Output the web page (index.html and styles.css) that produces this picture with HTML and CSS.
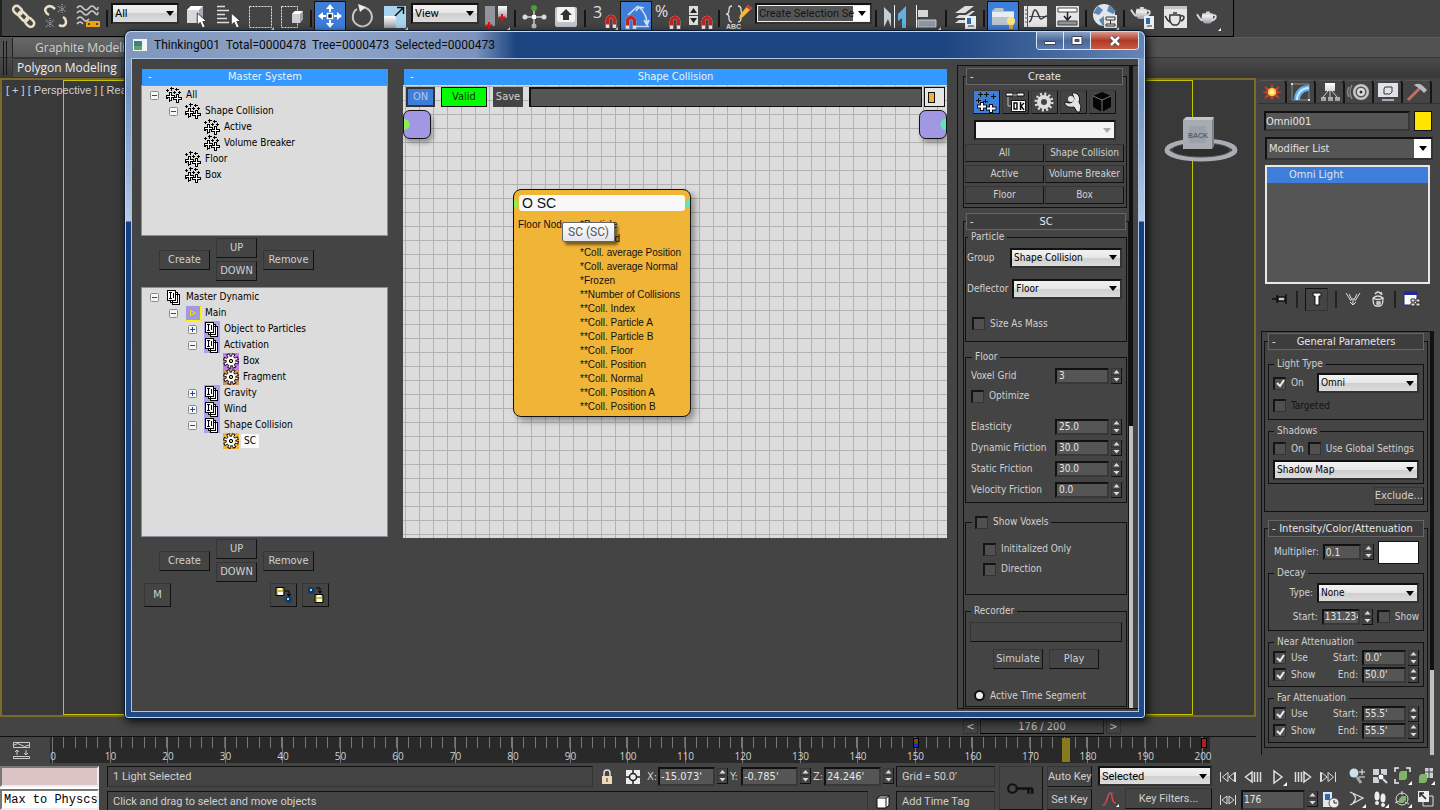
FILE: index.html
```html
<!DOCTYPE html>
<html lang="en">
<head>
  <meta charset="UTF-8" />
  <meta name="viewport" content="width=device-width, initial-scale=1" />
  <title>Thinking001</title>
  <link rel="stylesheet" href="styles.css">
</head>
<body>
  <!-- shared icons -->
  <svg class="sprite" aria-hidden="true">
    <linearGradient id="silver" x1="0" y1="0" x2="0" y2="1"><stop offset="0" stop-color="#fff"/><stop offset="1" stop-color="#9a9ea6"/></linearGradient>
    <symbol id="i-arrow" viewBox="0 0 12 18"><path d="M1 1v13l3-3 2.500 6 3-1.300-2.600-5.700H11z" fill="#fff" stroke="#333" stroke-width="1"/></symbol>
    <symbol id="i-magnet" viewBox="0 0 12 14"><path d="M2.500 14V6a3.500 3.500 0 0 1 7 0v8" fill="none" stroke="#f2f2f2" stroke-width="3.600"/><path d="M2.500 10.500V6a3.500 3.500 0 0 1 7 0v4.500" fill="none" stroke="#c0241e" stroke-width="3.400"/></symbol>
    <symbol id="i-pot" viewBox="0 0 24 16"><path d="M7 5C5 10 7 14 10 15h5c3-1 5-5 3-10z" fill="url(#silver)"/><path d="M11 3h4M7 5h11M7 12C3 10 3 7 1 5M18 6c5-1 5 4-1 6" fill="none" stroke="#d8dade" stroke-width="2"/></symbol>
    <symbol id="i-spin" viewBox="0 0 11 16"><path d="M.5 .5h10v15H.5z" fill="#444" stroke="#383838"/><path d="M10.500 0v16M0 15.500h11" stroke="#111"/><path d="M0 7.500h11" stroke="#333"/><path d="M2.500 5.500h6L5.500 2zM2.500 10h6l-3 3.500z" fill="#ddd"/></symbol>
    <symbol id="i-parts" viewBox="0 0 16 16"><g shape-rendering="crispEdges"><path d="M1.500 2v3M0 3.500h3M5.500 0v4M4 1.500h4M10.500 1v3M9 2.500h4M8.500 4v3M7 5.500h3M13.500 4v3M12 5.500h3M2 11.500H0M3 14.500h1" stroke="#000"/><path d="M3.500 5.500h2v3h3v2h-3v3h-2v-3h-3v-2h3z" fill="#fff" stroke="#000"/><path d="M10.500 7.500h2v3h3v2h-3v3h-2v-3h-3v-2h3z" fill="#fff" stroke="#000"/></g></symbol>
    <symbol id="i-dyn" viewBox="0 0 16 16"><g shape-rendering="crispEdges"><path d="M6.500 5.500h7v10h-7zM4.500 3.500h7v10h-7z" fill="#fff" stroke="#000"/><path d="M1.500 1.500h8v10h-8z" fill="#fff" stroke="#000"/><path d="M4.500 3v6M3 3.500h3M3 9.500h3M7.500 4v5" fill="none" stroke="#000"/></g></symbol>
    <symbol id="i-gear" viewBox="0 0 16 16"><circle cx="8" cy="8" r="6.200" fill="none" stroke="#000" stroke-width="3.400" stroke-dasharray="3 1.870"/><circle cx="8" cy="8" r="5" fill="#fff" stroke="#000"/><circle cx="8" cy="8" r="5.600" fill="none" stroke="#fff" stroke-width="2.600" stroke-dasharray="1.500 2.898" stroke-dashoffset="-.6"/><circle cx="8" cy="8" r="1.700" fill="#f0b437" stroke="#000"/></symbol>
    <symbol id="i-minus" viewBox="0 0 9 9"><rect x=".5" y=".5" width="8" height="8" rx="1" fill="#f6f6f6" stroke="#8a8a8a"/><path d="M2 4.500h5" stroke="#234a9a"/></symbol>
    <symbol id="i-plus" viewBox="0 0 9 9"><rect x=".5" y=".5" width="8" height="8" rx="1" fill="#f6f6f6" stroke="#8a8a8a"/><path d="M2 4.500h5M4.500 2v5" stroke="#234a9a"/></symbol>
    <symbol id="i-link" viewBox="0 0 28 28"><g fill="none" stroke="#e9dfc8" stroke-width="2.500"><rect x="3" y="5" width="10" height="7" rx="3.500" transform="rotate(45 8 8)"/><rect x="8" y="11" width="11" height="6" rx="3" transform="rotate(45 13 14)"/><rect x="15" y="17" width="10" height="7" rx="3.500" transform="rotate(45 20 20)"/></g></symbol>
  </svg>

  <header class="toolbar">
    <button class="tool" aria-label="Link"><svg viewBox="0 0 28 28"><use href="#i-link"/></svg></button>
    <button class="tool" aria-label="Unlink"><svg viewBox="0 0 28 28"><g fill="none" stroke="#e9dfc8" stroke-width="2.500"><path d="M7 13C3 11 2 7 5 5s6 0 8 2M17 23c3 2 7 1 7-3 0-3-1-4-3-5"/></g><g fill="none" stroke="#999" stroke-width="1.500" stroke-dasharray="1 1"><path d="M16 4l8 6M16 10l8-6M20 2v10M4 18l8 7M4 25l8-7M8 16v10"/></g></svg></button>
    <button class="tool" aria-label="Bind to space warp"><svg viewBox="0 0 28 28"><path d="M3 6q3-4 6 0t6 0 6 0 3-1M3 11q3-4 6 0t6 0 6 0 3-1M3 17q3-4 6 0t6 0M3 22q3-4 6 0" fill="none" stroke="#ccc" stroke-width="1.500"/><path d="M13 20h5v4h-5zM20 20h5v4h-5zM16 22h6" fill="none" stroke="#e7a416" stroke-width="2"/></svg></button>
    <i class="sep"></i>
    <select class="drop" aria-label="Selection filter"><option>All</option></select>
    <button class="tool" aria-label="Select object"><svg viewBox="0 0 28 28"><path d="M5 8l4-4h12v12l-4 5H5z" fill="#d5d8dc"/><path d="M5 8l4-4h12l-4 4z" fill="#fff"/><path d="M17 8l4-4v12l-4 5z" fill="#a5a9b0"/><use href="#i-arrow" x="14" y="10" width="12" height="17"/></svg></button>
    <button class="tool" aria-label="Select by name"><svg viewBox="0 0 28 28"><path d="M3 4.500h8M3 8.500h12M3 12.500h8M3 16.500h10M3 20.500h12" stroke="#ddd" stroke-width="1.500"/><use href="#i-arrow" x="16" y="10" width="12" height="17"/></svg></button>
    <button class="tool" aria-label="Rectangular region"><svg viewBox="0 0 28 28"><path d="M3.500 4.500h22v21h-22z" fill="none" stroke="#e4e4e4" stroke-dasharray="2 1"/><path d="M28 25v3h-3z" fill="#ddd"/></svg></button>
    <button class="tool" aria-label="Window crossing"><svg viewBox="0 0 28 28"><path d="M3.500 4.500h16v21h-16z" fill="none" stroke="#e4e4e4" stroke-dasharray="2 1"/><path d="M14 12l3-3h8v8l-3 4h-8z" fill="#ccd0d5"/><path d="M14 12l3-3h8l-3 3z" fill="#fff"/><path d="M22 12l3-3v8l-3 4z" fill="#9da1a8"/></svg></button>
    <i class="sep"></i>
    <button class="tool active" aria-label="Move"><svg viewBox="0 0 28 28"><path d="M11.500 11.500h5v5h-5z" fill="#222" stroke="#fff" stroke-width="1.500"/><path d="M14 2l4 5h-3v3h-2V7h-3zM14 26l4-5h-3v-3h-2v3h-3zM2 14l5-4v3h3v2H7v3zM26 14l-5-4v3h-3v2h3v3z" fill="#fff"/></svg></button>
    <button class="tool" aria-label="Rotate"><svg viewBox="0 0 28 28"><path d="M16 5.500a9.500 9.500 0 1 1-7 1.500" fill="none" stroke="#c4c8cc" stroke-width="2"/><path d="M10 2l8 3-6 5z" fill="#eee"/></svg></button>
    <button class="tool" aria-label="Scale"><svg viewBox="0 0 28 28"><path d="M4 4h22v22H4z" fill="#a8d4ee"/><path d="M4 14h12v12H4z" fill="url(#silver)"/><path d="M15 14l8-8M17 5.500h6.500V12" fill="none" stroke="#111" stroke-width="1.500"/><path d="M28 25v3h-3z" fill="#ddd"/></svg></button>
    <select class="drop" aria-label="Coordinate system"><option>View</option></select>
    <button class="tool" aria-label="Pivot center"><svg viewBox="0 0 28 28"><path d="M3 4h10v20H3z" fill="#90949c"/><path d="M16 4h9v12h-9z" fill="url(#silver)"/><path d="M7 20v7M3.500 23.500h7M20 12v7M16.500 15.500h7" stroke="#d11" stroke-width="2"/><path d="M28 25v3h-3z" fill="#ddd"/></svg></button>
    <i class="sep"></i>
    <button class="tool" aria-label="Manipulate"><svg viewBox="0 0 28 28"><path d="M14 6v18M4 15h20" stroke="#ccc" stroke-width="1.500"/><circle cx="14" cy="6" r="3" fill="#4f9f35"/><circle cx="5" cy="15" r="2.500" fill="#ddd"/><circle cx="24" cy="15" r="2.500" fill="#ddd"/><circle cx="14" cy="24" r="2.500" fill="#bbb"/><path d="M12 13h4v4h-4z" fill="#fff"/></svg></button>
    <button class="tool" aria-label="Keyboard override"><svg viewBox="0 0 28 28"><rect x="3" y="5" width="22" height="20" rx="2" fill="#c3c6ca"/><rect x="5" y="5" width="18" height="15" rx="2" fill="#f3f3f3"/><path d="M14 7l6 6h-3v5h-6v-5H8z" fill="#333"/></svg></button>
    <i class="sep"></i>
    <button class="tool" aria-label="Snaps toggle"><svg viewBox="0 0 28 28"><text class="glyph" x="3" y="16">3</text><use href="#i-magnet" x="15" y="12" width="12" height="14"/><path d="M28 25v3h-3z" fill="#ddd"/></svg></button>
    <button class="tool active" aria-label="Angle snap"><svg viewBox="0 0 28 28"><path d="M6 13L16 4M17 5q8 7 8 17M14 24.500h13M14 9l3-4 5 1M22 18l3 5 2-5" fill="none" stroke="#d6e4f8" stroke-width="1.500"/><use href="#i-magnet" x="3" y="13" width="12" height="14"/></svg></button>
    <button class="tool" aria-label="Percent snap"><svg viewBox="0 0 28 28"><text class="glyph" x="1" y="15">%</text><use href="#i-magnet" x="15" y="13" width="12" height="14"/></svg></button>
    <button class="tool" aria-label="Spinner snap"><svg viewBox="0 0 28 28"><path d="M3 4h9v9H3zM3 14h9v9H3z" fill="#ddd"/><path d="M4 11h7L7.500 6zM4 16h7l-3.500 5z" fill="#222"/><use href="#i-magnet" x="15" y="13" width="12" height="14"/></svg></button>
    <i class="sep"></i>
    <button class="tool" aria-label="Edit named selections"><svg viewBox="0 0 28 28"><path d="M8 4q-3 0-3 4t-3 4q3 0 3 4t3 4M14 4q3 0 3 4t3 4q-3 0-3 4t-3 4" fill="none" stroke="#ddd" stroke-width="1.300"/><path d="M24 3l4 3-9 9-4 2 1-4z" fill="#f2b83a"/><path d="M24 3l4 3-2 2-4-3z" fill="#c33"/><text class="abc" x="2" y="27">ABC</text></svg></button>
    <select class="drop dark named" aria-label="Named selection sets"><option>Create Selection Se</option></select>
    <i class="sep"></i>
    <button class="tool" aria-label="Mirror"><svg viewBox="0 0 28 28"><path d="M3 5l7 7v13l-3-8-4 8z" fill="#c6ced6"/><path d="M25 4l-8 8v7l4-3v10h4z" fill="#66b0e0"/><path d="M13.500 3v23" stroke="#eee"/></svg></button>
    <button class="tool" aria-label="Align"><svg viewBox="0 0 28 28"><path d="M3.500 3v23" stroke="#eee"/><path d="M5 8h10v7H5z" fill="#d4d8dc"/><path d="M5 18h18v7H5z" fill="#8f98a3" stroke="#ddd" stroke-width=".8"/><path d="M28 25v3h-3z" fill="#ddd"/></svg></button>
    <i class="sep"></i>
    <button class="tool" aria-label="Layers"><svg viewBox="0 0 28 28"><path d="M4 11l10-7h9l-9 7zM4 16l4-3 7 0 6-4h3l-9 7zM4 21l4-3h7l6-4h3l-9 7z" fill="#ddd"/><path d="M14 14h11v13H14z" fill="#e9eef3"/><path d="M16 16h4v6h-4z" fill="#2e6aa9"/><path d="M17 24h6" stroke="#333"/></svg></button>
    <i class="sep"></i>
    <button class="tool active" aria-label="Ribbon toggle"><svg viewBox="0 0 28 28"><path d="M3 9l3-3h8l1 3h10v14H3z" fill="#b9c3cd"/><path d="M3 10h22v5H3z" fill="#e8edf2"/><circle cx="22" cy="19" r="4" fill="#ffe278"/><path d="M20 23h4v4h-4z" fill="#e9a63a"/></svg></button>
    <button class="tool" aria-label="Curve editor"><svg viewBox="0 0 28 28"><path d="M3 4h23v21H3z" fill="#e3e5e7"/><path d="M6.500 4v21M4 8h3M4 12h3M4 16h3M4 20h3M8 14.500h18" stroke="#555"/><path d="M8 20c4-1 3-12 6-12s4 9 6 9 3-3 6-3" fill="none" stroke="#333" stroke-width="1.500"/></svg></button>
    <button class="tool" aria-label="Schematic view"><svg viewBox="0 0 28 28"><path d="M3 4h23v21H3z" fill="#e3e5e7"/><path d="M5 6h19v4H5z" fill="#fff" stroke="#444"/><path d="M5 19h19v4H5z" fill="#8f9599" stroke="#444"/><path d="M14.500 10v7M11 14l3.500 4 3.500-4" fill="none" stroke="#222" stroke-width="1.500"/></svg></button>
    <i class="sep"></i>
    <button class="tool" aria-label="Material editor"><svg viewBox="0 0 28 28"><circle cx="13" cy="13" r="11" fill="#dfe6ec"/><path d="M7 4l5 4-4 5-6-2M18 3l-2 6 6 3 3-3M8 18l5-4 3 6-4 4z" fill="#5e86b5"/><path d="M13 13h13v13H13z" fill="#e6e8ea"/><path d="M15 15h9v3h-9zM15 22h9v2h-9zM19.500 18v4" fill="none" stroke="#333"/><path d="M28 25v3h-3z" fill="#ddd"/></svg></button>
    <i class="sep"></i>
    <button class="tool" aria-label="Render setup"><svg viewBox="0 0 28 28"><use href="#i-pot" x="1" y="3" width="22" height="15"/><path d="M15 14h10v13H15z" fill="#e9eef3"/><path d="M17 16h4v6h-4z" fill="#2e6aa9"/><path d="M18 24h5" stroke="#333"/></svg></button>
    <button class="tool" aria-label="Rendered frame"><svg viewBox="0 0 28 28"><path d="M3 4h23v22H3z" fill="#e6e6e6"/><path d="M3 4h23v3H3z" fill="#c2c4c8"/><path d="M9 13h10c1 5 0 8-3 10h-4c-3-2-4-5-3-10zM9 20c-3-1-3-4-5-6M20 14c4-1 4 3 0 5M12 11h4" fill="none" stroke="#333" stroke-width="1.500"/></svg></button>
    <button class="tool" aria-label="Render"><svg viewBox="0 0 28 28"><use href="#i-pot" x="3" y="7" width="22" height="16"/><path d="M28 26v3h-3z" fill="#fff"/></svg></button>
  </header>

  <div class="ribbon">
    <span class="grip"></span>
    <div class="ribbon-tabs">
      <a href="#" class="ribbon-tab">Graphite Modeling</a>
      <a href="#" class="ribbon-panel">Polygon Modeling</a>
    </div>
  </div>

  <main class="work">
    <div class="stage">
      <section class="viewport">
        <p class="view-label">[ + ] [ Perspective ] [ Realistic ]</p>
        <div class="safe-frame"></div>
        <svg class="view-cube" viewBox="0 0 80 50"><ellipse cx="38" cy="34" rx="34" ry="9" fill="none" stroke="#a9aeb4" stroke-width="5"/><ellipse cx="38" cy="34" rx="29" ry="7" fill="#2e2e2e" stroke="#555"/><path d="M20 4l3-3h28l-2 4z" fill="#c2c6ca"/><path d="M20 4h29v29H20z" fill="#a7abb2"/><path d="M49 5l2-4v29l-2 3z" fill="#7e828a"/><path d="M26 10h17v17H26z" fill="#9ca0a8"/><text class="cube-text" x="35" y="22">BACK</text></svg>
      </section>
      <div class="time-slider">
        <button class="time-btn">&lt;</button><button class="time-thumb">176 / 200</button><button class="time-btn">&gt;</button>
      </div>
      <div class="track">
        <svg class="track-icon" viewBox="0 0 20 18"><path d="M1.500 1.500h16v5h-16zM2 4q4-3 7 0t8 0M5 9v5M3 11l2-2 2 2M14 9v5M12 12l2 2 2-2M1.500 15.500h16v2h-16z" fill="none" stroke="#ccc"/></svg>
        <div class="ruler">
          <div class="tick"><span>0</span></div><div class="tick"><span>10</span></div><div class="tick"><span>20</span></div><div class="tick"><span>30</span></div><div class="tick"><span>40</span></div>
          <div class="tick"><span>50</span></div><div class="tick"><span>60</span></div><div class="tick"><span>70</span></div><div class="tick"><span>80</span></div><div class="tick"><span>90</span></div>
          <div class="tick"><span>100</span></div><div class="tick"><span>110</span></div><div class="tick"><span>120</span></div><div class="tick"><span>130</span></div><div class="tick"><span>140</span></div>
          <div class="tick"><span>150</span></div><div class="tick"><span>160</span></div><div class="tick"><span>170</span></div><div class="tick"><span>180</span></div><div class="tick"><span>190</span></div>
          <div class="tick last"><span>200</span></div>
          <i class="key multi" style="left: 75%"></i>
          <i class="now" style="left: 88%"></i>
          <i class="key red" style="left: 100%"></i>
        </div>
      </div>
    </div>

    <aside class="command">
      <nav class="tabs">
        <button aria-label="Create"><svg viewBox="0 0 24 20"><path d="M12 1l2 6 6-3-3 5 5 1-5 2 3 5-6-3-2 5-2-5-6 3 3-5-5-2 5-1-3-5 6 3z" fill="#c8402a"/><circle cx="12" cy="10" r="4" fill="#ffd23e"/><circle cx="12" cy="10" r="2" fill="#fff7c0"/></svg></button>
        <button class="on" aria-label="Modify"><svg viewBox="0 0 24 20"><path d="M3 2h17v16H3z" fill="none" stroke="#888"/><path d="M5 18C5 9 11 3 20 3v6c-5 0-9 4-9 9z" fill="#5eb0ee"/><path d="M8 18C8 11 13 6 20 6" fill="none" stroke="#d2ecff" stroke-width="2"/><path d="M2 1h2v2H2zM19 17h2v2h-2z" fill="#ddd"/></svg></button>
        <button aria-label="Hierarchy"><svg viewBox="0 0 24 20"><path d="M7 1h10v8H7zM3 15h5v4H3zM10 15h5v4h-5zM17 15h5v4h-5z" fill="url(#silver)"/><path d="M12 9v6M10 9l-5 6M14 9l5 6" stroke="#ccc"/></svg></button>
        <button aria-label="Motion"><svg viewBox="0 0 24 20"><circle cx="14" cy="10" r="8" fill="#c3c7cb"/><circle cx="14" cy="10" r="5.500" fill="#555"/><circle cx="14" cy="10" r="4" fill="#ddd"/><circle cx="14" cy="10" r="1.500" fill="#333"/><path d="M5 3q-4 7 0 14M2 5q-3 5 0 10" fill="none" stroke="#888" stroke-width="1.500"/></svg></button>
        <button aria-label="Display"><svg viewBox="0 0 24 20"><path d="M2 1h20v14H2z" fill="#dfe3e7"/><path d="M9 5h7v5l-2 2H8V7zM12 15v3" fill="none" stroke="#333"/><path d="M6 17h12v2H6z" fill="#aab"/></svg></button>
        <button aria-label="Utilities"><svg viewBox="0 0 24 20"><path d="M3 18L15 6" stroke="#c07060" stroke-width="3"/><path d="M9 3q5-3 9 1l4 4-3 3-4-4-3-2z" fill="#b8bcc2"/></svg></button>
      </nav>
      <div class="name-row">
        <input type="text" class="field" value="Omni001" aria-label="Object name" />
        <button class="swatch yellow" aria-label="Object color"></button>
      </div>
      <select class="drop dark modifier" aria-label="Modifier List"><option>Modifier List</option></select>
      <ul class="stack"><li>Omni Light</li></ul>
      <div class="stack-tools">
        <button aria-label="Pin stack"><svg viewBox="0 0 18 18"><path d="M1 9h5M6 5v8M15 4v10M7 7h7v4H7z" stroke="#111" stroke-width="1.500" fill="#ccc"/></svg></button>
        <i class="sep"></i>
        <button class="boxed" aria-label="Show end result"><svg viewBox="0 0 18 18"><path d="M5 3h8v3h-2v9H7V6H5z" fill="#fff" stroke="#111"/></svg></button>
        <i class="sep"></i>
        <button aria-label="Make unique"><svg viewBox="0 0 18 18"><path d="M2 3l5 8M16 3l-5 8M5 4l3 6M13 4l-3 6M9 8v7M6 12l3 3 3-3" fill="none" stroke="#ddd"/></svg></button>
        <button aria-label="Remove modifier"><svg viewBox="0 0 18 18"><path d="M4 8c0 5 1 8 3 8h4c2 0 3-3 3-8M4 8q5-4 10 0q-5 3-10 0M6 4q3-4 6 0M12 2l1 3M8 12h3v2H8z" fill="none" stroke="#ddd" stroke-width="1.300"/></svg></button>
        <i class="sep"></i>
        <button aria-label="Configure sets"><svg viewBox="0 0 18 18"><path d="M1 2h13v13H1z" fill="#fff" stroke="#222a8a"/><path d="M1 2h13v3H1z" fill="#222a9a"/><path d="M8 9h4v3H8zM13 9h4v3h-4zM8 13h4v3H8zM13 13h4v3h-4z" fill="#ddd" stroke="#333"/></svg></button>
      </div>

      <div class="params">
        <div class="rollups">
          <section class="rollup">
            <h2><b>-</b>General Parameters</h2>
            <fieldset>
              <legend>Light Type</legend>
              <div class="line tall"><label class="grow"><input type="checkbox" checked />On</label><select class="drop w100" aria-label="Light type"><option>Omni</option></select></div>
              <div class="line"><label class="off"><input type="checkbox" disabled />Targeted</label></div>
            </fieldset>
            <fieldset>
              <legend>Shadows</legend>
              <div class="line"><label><input type="checkbox" />On</label><label><input type="checkbox" />Use Global Settings</label></div>
              <div class="line"><select class="drop grow" aria-label="Shadow type"><option>Shadow Map</option></select></div>
            </fieldset>
            <button class="btn exclude">Exclude...</button>
          </section>

          <section class="rollup">
            <h2><b>-</b>Intensity/Color/Attenuation</h2>
            <div class="line tall multiplier"><label for="mult">Multiplier:</label><span class="spin"><input id="mult" type="text" value="0.1" /><svg><use href="#i-spin"/></svg></span><button class="swatch white" aria-label="Light color"></button></div>
            <fieldset>
              <legend>Decay</legend>
              <div class="line tall end"><label for="dtype">Type:</label><select id="dtype" class="drop w100"><option>None</option></select></div>
              <div class="line end"><label for="dstart">Start:</label><span class="spin"><input id="dstart" type="text" value="131.234" /><svg><use href="#i-spin"/></svg></span><label><input type="checkbox" />Show</label></div>
            </fieldset>
            <fieldset>
              <legend>Near Attenuation</legend>
              <div class="line short"><label class="grow"><input type="checkbox" checked />Use</label><label for="ns">Start:</label><span class="spin wide"><input id="ns" type="text" value="0.0'" /><svg><use href="#i-spin"/></svg></span></div>
              <div class="line short"><label class="grow"><input type="checkbox" checked />Show</label><label for="ne">End:</label><span class="spin wide"><input id="ne" type="text" value="50.0'" /><svg><use href="#i-spin"/></svg></span></div>
            </fieldset>
            <fieldset>
              <legend>Far Attenuation</legend>
              <div class="line short"><label class="grow"><input type="checkbox" checked />Use</label><label for="fs">Start:</label><span class="spin wide"><input id="fs" type="text" value="55.5'" /><svg><use href="#i-spin"/></svg></span></div>
              <div class="line short"><label class="grow"><input type="checkbox" checked />Show</label><label for="fe">End:</label><span class="spin wide"><input id="fe" type="text" value="55.5'" /><svg><use href="#i-spin"/></svg></span></div>
            </fieldset>
          </section>
        </div>
        <div class="scroll"><i class="rest upper"></i><i class="thumb"></i></div>
      </div>
    </aside>
  </main>

  <footer class="status">
    <div class="listener">
      <input type="text" class="pink" aria-label="Macro recorder" />
      <input type="text" class="mono" value="Max to Physcs" aria-label="Script listener" />
    </div>
    <div class="messages">
      <div class="bar-row">
        <p class="well grow">1 Light Selected</p>
        <button class="bare" aria-label="Lock selection"><svg viewBox="0 0 18 18"><path d="M6 8V5a3 3 0 0 1 6 0v3" fill="none" stroke="#ddd" stroke-width="1.500"/><path d="M4 8h10v8H4z" fill="#f0d9b8"/><path d="M9 10v4" stroke="#333"/></svg></button>
        <button class="bare" aria-label="Absolute mode"><svg viewBox="0 0 18 18"><path d="M2 2h14v14H2z" fill="#ececec"/><circle cx="9" cy="9" r="3.500" fill="none" stroke="#222" stroke-width="1.500"/><path d="M9 2v4M9 12v4M2 9h4M12 9h4" stroke="#222" stroke-width="1.500"/></svg></button>
        <div class="coord"><label for="cx">X:</label><span class="spin big"><input id="cx" type="text" value="-15.073'" /><svg><use href="#i-spin"/></svg></span></div>
        <div class="coord"><label for="cy">Y:</label><span class="spin big"><input id="cy" type="text" value="-0.785'" /><svg><use href="#i-spin"/></svg></span></div>
        <div class="coord"><label for="cz">Z:</label><span class="spin big"><input id="cz" type="text" value="24.246'" /><svg><use href="#i-spin"/></svg></span></div>
        <p class="well side">Grid = 50.0'</p>
      </div>
      <div class="bar-row">
        <p class="well grow">Click and drag to select and move objects</p>
        <button class="bare" aria-label="Adaptive degradation"><svg viewBox="0 0 18 18"><path d="M4 5l3-2h9v9l-3 3H4z" fill="#fff" stroke="#111"/><path d="M4 5h9v10M13 5l3-2" fill="none" stroke="#111"/></svg></button>
        <button class="well side">Add Time Tag</button>
      </div>
    </div>
    <button class="btn set-key" aria-label="Set keys"><svg viewBox="0 0 26 14"><circle cx="5" cy="7" r="4" fill="none" stroke="#111" stroke-width="2"/><path d="M9 7h15M20 7v5M23.500 7v5" stroke="#111" stroke-width="2.500"/></svg></button>
    <div class="key-col modes"><button class="btn">Auto Key</button><button class="btn">Set Key</button></div>
    <div class="key-col filters">
      <select class="drop" aria-label="Key set"><option>Selected</option></select>
      <div class="bar-row"><button class="bare" aria-label="Tangents"><svg viewBox="0 0 18 18"><path d="M2 15c4 1 4-11 7-12s1 11 6 10" fill="none" stroke="#d44" stroke-width="1.500"/><path d="M1 15h3M8 3h5" stroke="#46a"/><path d="M18 14v3h-3z" fill="#fff"/></svg></button><button class="btn grow">Key Filters...</button></div>
    </div>
    <div class="playback">
      <div class="bar-row">
        <button class="bare" aria-label="Go to start"><svg viewBox="0 0 18 18"><path d="M1.500 4v10M9 4.500v9L3.500 9zM15.500 4.500v9L10 9zM16.500 4v10" fill="none" stroke="#ddd"/></svg></button>
        <button class="bare" aria-label="Previous frame"><svg viewBox="0 0 18 18"><path d="M8 4v10L1.500 9zM10.500 4v10M13.500 4v10M16.500 4v10" fill="none" stroke="#ddd" stroke-width="1.500"/></svg></button>
        <button class="bare" aria-label="Play"><svg viewBox="0 0 18 18"><path d="M5 3v12l8-6z" fill="none" stroke="#ddd" stroke-width="1.500"/><path d="M18 14v4h-4z" fill="#fff"/></svg></button>
        <button class="bare" aria-label="Next frame"><svg viewBox="0 0 18 18"><path d="M10 4v10l6.500-5zM7.500 4v10M4.500 4v10M1.500 4v10" fill="none" stroke="#ddd" stroke-width="1.500"/></svg></button>
        <button class="bare" aria-label="Go to end"><svg viewBox="0 0 18 18"><path d="M1.500 4v10M2.500 4.500v9L8 9zM9 4.500v9L14.500 9zM16.500 4v10" fill="none" stroke="#ddd"/></svg></button>
      </div>
      <div class="bar-row">
        <button class="bare" aria-label="Key mode"><svg viewBox="0 0 18 18"><path d="M1.500 4v10M8 5v8L3 9zM10 5v8l5-4zM16.500 4v10" fill="none" stroke="#ddd"/></svg></button>
        <span class="spin frame"><input type="text" value="176" aria-label="Frame" /><svg><use href="#i-spin"/></svg></span>
        <button class="bare" aria-label="Time configuration"><svg viewBox="0 0 18 18"><path d="M1 1h9v15H1z" fill="#dfe6ee"/><path d="M3 3h5v6H3z" fill="#2e6aa9"/><circle cx="12" cy="12" r="5" fill="#eee" stroke="#555"/><path d="M12 9v3h3" fill="none" stroke="#222"/></svg></button>
      </div>
    </div>
    <div class="nav-tools">
      <button class="bare" aria-label="Zoom"><svg viewBox="0 0 18 18"><circle cx="6" cy="6" r="4.500" fill="#cfe0ea"/><path d="M9 10l4 6" stroke="#aaa" stroke-width="3"/><path d="M11 5h6M14 2v6M11 10h6" stroke="#eee"/></svg></button>
      <button class="bare" aria-label="Zoom all"><svg viewBox="0 0 18 18"><path d="M2 2h6v6H2zM10 2h6v6h-6zM2 10h6v6H2z" fill="#cdd2d6"/><circle cx="10" cy="10" r="3" fill="#fff" stroke="#444"/><path d="M12 12l4 4" stroke="#ddd" stroke-width="2"/></svg></button>
      <button class="bare" aria-label="Zoom extents"><svg viewBox="0 0 18 18"><path d="M1 5V1h4M12 1h4v4M1 12v4h4" fill="none" stroke="#eee" stroke-width="1.500"/><path d="M5 6l2-2h6v7l-2 2H5z" fill="#7eb46a"/><path d="M18 14v4h-4z" fill="#fff"/></svg></button>
      <button class="bare" aria-label="Zoom extents all"><svg viewBox="0 0 18 18"><path d="M8 1h8v10H8z" fill="#cdd2d6"/><path d="M2 9l2-2h6v7l-2 2H2z" fill="#7eb46a"/><path d="M8 5h8M12 1v10" stroke="#444"/><path d="M18 14v4h-4z" fill="#fff"/></svg></button>
      <button class="bare" aria-label="Field of view"><svg viewBox="0 0 18 18"><path d="M2 2l13 6L2 15M5 4q5 4 0 9" fill="none" stroke="#ddd" stroke-width="1.300"/><path d="M18 14v4h-4z" fill="#fff"/></svg></button>
      <button class="bare" aria-label="Walk"><svg viewBox="0 0 18 18"><ellipse cx="6" cy="6" rx="2.500" ry="4.500" fill="#eee"/><ellipse cx="12" cy="8" rx="2.500" ry="4.500" fill="#eee"/><circle cx="6" cy="13" r="2" fill="#eee"/><circle cx="12" cy="15" r="2" fill="#eee"/><path d="M18 14v4h-4z" fill="#fff"/></svg></button>
      <button class="bare" aria-label="Orbit"><svg viewBox="0 0 18 18"><circle cx="8" cy="9" r="6" fill="none" stroke="#ddd"/><path d="M5 9l3-3h4v4l-3 3H5z" fill="#7eb46a"/><path d="M8 1v4M1 13l4-2M15 14l-4-2" stroke="#ddd"/><path d="M18 14v4h-4z" fill="#fff"/></svg></button>
      <button class="bare" aria-label="Maximize viewport"><svg viewBox="0 0 18 18"><path d="M6 6h10v10H6z" fill="none" stroke="#ddd"/><path d="M1 1h11v11H1z" fill="#eee"/><path d="M3 3l6 6M3 7V3h4" fill="none" stroke="#222" stroke-width="1.500"/></svg></button>
    </div>
  </footer>

  <!-- floating editor window -->
  <div class="window">
    <div class="titlebar">
      <svg class="app-icon" viewBox="0 0 14 12"><path d="M0 0h14v12H0z" fill="#f4f4f4"/><path d="M1 2h8v9H1z" fill="#3f7f8a"/><path d="M1 7h8v4H1z" fill="#5aa66a"/></svg>
      <h1>Thinking001  Total=0000478  Tree=0000473  Selected=0000473</h1>
      <div class="win-btns">
        <button aria-label="Minimize"><svg viewBox="0 0 16 12"><path d="M2.500 6.500h11v3h-11z" fill="#fff" stroke="#445"/></svg></button>
        <button aria-label="Maximize"><svg viewBox="0 0 16 12"><path d="M3 1.500h10v8H3z" fill="#fff" stroke="#445"/><path d="M6 4.500h4v2H6z" fill="#4a6590" stroke="#445"/></svg></button>
        <button class="close" aria-label="Close"><svg viewBox="0 0 16 12"><path d="M4 2l8 8M12 2l-8 8" stroke="#445" stroke-width="4"/><path d="M4 2l8 8M12 2l-8 8" stroke="#fff" stroke-width="2.500"/></svg></button>
      </div>
    </div>

    <div class="client">
      <div class="trees">
        <h2 class="bluebar"><b>-</b>Master System</h2>
        <ul class="tree systems">
          <li><svg class="tog"><use href="#i-minus"/></svg><svg class="ico"><use href="#i-parts"/></svg>All</li>
          <li class="l1"><svg class="tog"><use href="#i-minus"/></svg><svg class="ico"><use href="#i-parts"/></svg>Shape Collision</li>
          <li class="l2"><i class="tog"></i><svg class="ico"><use href="#i-parts"/></svg>Active</li>
          <li class="l2"><i class="tog"></i><svg class="ico"><use href="#i-parts"/></svg>Volume Breaker</li>
          <li class="l1"><i class="tog"></i><svg class="ico"><use href="#i-parts"/></svg>Floor</li>
          <li class="l1"><i class="tog"></i><svg class="ico"><use href="#i-parts"/></svg>Box</li>
        </ul>
        <div class="tree-btns">
          <button class="btn">Create</button>
          <div class="updown"><button class="btn">UP</button><button class="btn">DOWN</button></div>
          <button class="btn">Remove</button>
        </div>
        <ul class="tree dynamics">
          <li><svg class="tog"><use href="#i-minus"/></svg><svg class="ico"><use href="#i-dyn"/></svg>Master Dynamic</li>
          <li class="l1"><svg class="tog"><use href="#i-minus"/></svg><svg class="ico" viewBox="0 0 16 16"><path d="M.5 .5h15v15H.5z" fill="#a198e4" stroke="#fff200"/><path d="M5.500 5.500v5l5-2.500z" fill="none" stroke="#f0e000"/></svg>Main</li>
          <li class="l2"><svg class="tog"><use href="#i-plus"/></svg><svg class="ico violet"><use href="#i-dyn"/></svg>Object to Particles</li>
          <li class="l2"><svg class="tog"><use href="#i-minus"/></svg><svg class="ico violet"><use href="#i-dyn"/></svg>Activation</li>
          <li class="l3"><i class="tog"></i><svg class="ico pinkish"><use href="#i-gear"/></svg>Box</li>
          <li class="l3"><i class="tog"></i><svg class="ico tan"><use href="#i-gear"/></svg>Fragment</li>
          <li class="l2"><svg class="tog"><use href="#i-plus"/></svg><svg class="ico violet"><use href="#i-dyn"/></svg>Gravity</li>
          <li class="l2"><svg class="tog"><use href="#i-plus"/></svg><svg class="ico violet"><use href="#i-dyn"/></svg>Wind</li>
          <li class="l2"><svg class="tog"><use href="#i-minus"/></svg><svg class="ico violet"><use href="#i-dyn"/></svg>Shape Collision</li>
          <li class="l3"><i class="tog"></i><svg class="ico amber"><use href="#i-gear"/></svg><mark>SC</mark></li>
        </ul>
        <div class="tree-btns">
          <button class="btn">Create</button>
          <div class="updown"><button class="btn">UP</button><button class="btn">DOWN</button></div>
          <button class="btn">Remove</button>
        </div>
        <div class="file-btns">
          <button class="btn">M</button>
          <button class="btn push" aria-label="Save to world"><svg viewBox="0 0 20 18"><path d="M2 1.500h8v8H2z" fill="#c9bf3c" stroke="#000"/><path d="M4 2h4v2H4zM4 6h5v3H4z" fill="#fff"/><circle cx="14.500" cy="13.500" r="3.500" fill="#0f3a6c"/><path d="M13 12h2v2h-2z" fill="#8fe0e8"/><path d="M11 5h4v4M13 8l2 2 2-2" fill="none" stroke="#000"/></svg></button>
          <button class="btn" aria-label="Load from world"><svg viewBox="0 0 20 18"><path d="M9 8.500h8v8H9z" fill="#c9bf3c" stroke="#000"/><path d="M11 9h4v2h-4zM11 13h5v3h-5z" fill="#fff"/><circle cx="5" cy="4.500" r="3.500" fill="#0f3a6c"/><path d="M4 3h2v2H4z" fill="#8fe0e8"/><path d="M10 2h4v4M12 5l2 2 2-2" fill="none" stroke="#000"/></svg></button>
        </div>
      </div>

      <div class="graph">
        <h2 class="bluebar"><b>-</b>Shape Collision</h2>
        <div class="canvas">
          <div class="canvas-bar">
            <button class="on">ON</button>
            <button class="valid">Valid</button>
            <button class="save">Save</button>
            <input type="text" aria-label="Path" />
            <button class="bypass" aria-label="Bypass"><i></i></button>
          </div>
          <div class="port in"></div>
          <div class="port out"></div>
          <article class="node">
            <h3>O SC</h3>
            <div class="node-body">
              <p>Floor Node</p>
              <ul>
                <li>*Particle</li><li>*Collided</li><li>*Coll. average Position</li><li>*Coll. average Normal</li><li>*Frozen</li><li>**Number of Collisions</li><li>**Coll. Index</li><li>**Coll. Particle A</li><li>**Coll. Particle B</li><li>**Coll. Floor</li><li>**Coll. Position</li><li>**Coll. Normal</li><li>**Coll. Position A</li><li>**Coll. Position B</li>
              </ul>
            </div>
            <div class="tip">SC (SC)</div>
          </article>
        </div>
      </div>

      <div class="inspector">
        <div class="rollups">
          <section class="rollup">
            <h2><b>-</b>Create</h2>
            <div class="kinds">
              <button class="picked" aria-label="Particles"><svg viewBox="0 0 24 22"><path d="M6.500 1v5M4 3.500h5M12.500 1v5M10 3.500h5M19.500 3v5M17 5.500h5M4.500 7v5M2 9.500h5M11.500 8v4M9 10.500h5" stroke="#111"/><path d="M8 11v9M3 15.500h10M17 13v9M12 17.500h10.500" stroke="#111" stroke-width="4"/><path d="M8 12v7M4 15.500h8M17 14v7M13 17.500h8.500" stroke="#fff" stroke-width="2"/></svg></button>
              <button aria-label="Operators"><svg viewBox="0 0 24 22"><path d="M3 2h7v3H3zM14 2h7v3h-7z" fill="#fff" stroke="#111"/><path d="M10 4h4M5 6v9h3" fill="none" stroke="#bbb"/><path d="M8.500 9.500h14v11h-14z" fill="#fff" stroke="#111"/><path d="M11 12h3v6h-3zM17.500 11v8M21 12l-3 3 3 4" fill="none" stroke="#111" stroke-width="1.500"/></svg></button>
              <button aria-label="Helpers"><svg viewBox="0 0 24 22"><circle cx="12" cy="11" r="8" fill="none" stroke="#ddd" stroke-width="3" stroke-dasharray="2 2.190"/><circle cx="12" cy="11" r="5" fill="none" stroke="#ddd" stroke-width="4"/></svg></button>
              <button aria-label="Tools"><svg viewBox="0 0 24 22"><path d="M11 2c5-1 9 3 7 9l2 4-1 6h-3l-3-5c-5 1-10-1-9-5l4 1c3 0 5-2 5-5z" fill="#e4e4e4" stroke="#111"/><circle cx="10" cy="8" r="3" fill="#e4e4e4"/></svg></button>
              <button aria-label="Black box"><svg viewBox="0 0 24 22"><path d="M12 1l9 4v11l-9 5-9-5V5z" fill="#050505"/><path d="M3 5l9 4 9-4M12 9v12" fill="none" stroke="#777"/></svg></button>
            </div>
            <select class="drop blank" aria-label="Operator list"><option></option></select>
            <div class="pairs">
              <button class="btn">All</button><button class="btn">Shape Collision</button>
              <button class="btn">Active</button><button class="btn">Volume Breaker</button>
              <button class="btn">Floor</button><button class="btn">Box</button>
            </div>
          </section>

          <section class="rollup open">
            <h2><b>-</b>SC</h2>
            <fieldset class="particle">
              <legend>Particle</legend>
              <div class="line"><label for="grp" class="grow">Group</label><select id="grp" class="drop w110"><option>Shape Collision</option></select></div>
              <div class="line"><label for="defl" class="grow">Deflector</label><select id="defl" class="drop w110"><option>Floor</option></select></div>
              <div class="line"><label><input type="checkbox" />Size As Mass</label></div>
            </fieldset>
            <fieldset class="floor">
              <legend>Floor</legend>
              <div class="line"><label for="vg" class="grow">Voxel Grid</label><span class="spin mid"><input id="vg" type="text" value="3" /><svg><use href="#i-spin"/></svg></span></div>
              <div class="line optimize"><label><input type="checkbox" />Optimize</label></div>
              <div class="line"><label for="el" class="grow">Elasticity</label><span class="spin mid"><input id="el" type="text" value="25.0" /><svg><use href="#i-spin"/></svg></span></div>
              <div class="line"><label for="df" class="grow">Dynamic Friction</label><span class="spin mid"><input id="df" type="text" value="30.0" /><svg><use href="#i-spin"/></svg></span></div>
              <div class="line"><label for="sf" class="grow">Static Friction</label><span class="spin mid"><input id="sf" type="text" value="30.0" /><svg><use href="#i-spin"/></svg></span></div>
              <div class="line"><label for="vf" class="grow">Velocity Friction</label><span class="spin mid"><input id="vf" type="text" value="0.0" /><svg><use href="#i-spin"/></svg></span></div>
            </fieldset>
            <fieldset class="voxels">
              <legend><label><input type="checkbox" />Show Voxels</label></legend>
              <div class="line"><label><input type="checkbox" />Inititalized Only</label></div>
              <div class="line"><label><input type="checkbox" />Direction</label></div>
            </fieldset>
            <fieldset class="recorder">
              <legend>Recorder</legend>
              <div class="progress"></div>
              <div class="rec-btns"><button class="btn">Simulate</button><button class="btn">Play</button></div>
              <div class="line"><label><input type="radio" name="seg" checked />Active Time Segment</label></div>
            </fieldset>
          </section>
        </div>
        <div class="scroll"><i class="rest"></i><i class="thumb lower"></i></div>
      </div>
    </div>
  </div>
</body>
</html>
```
FILE: styles.css
```css
* {
  box-sizing: border-box;
}
body {
  margin: 0;
  min-height: 100vh;
  display: flex;
  flex-direction: column;
  position: relative;
  overflow: hidden;
  background: #444;
  color: #d0d0d0;
  font: 10px/14px "DejaVu Sans Condensed", "DejaVu Sans", sans-serif;
}
h1, h2, h3, p, ul, fieldset {
  margin: 0;
  padding: 0;
  font-size: inherit;
  font-weight: normal;
  list-style: none;
}
button, input, select {
  margin: 0;
  padding: 0;
  border: 0;
  border-radius: 0;
  background: none;
  color: inherit;
  font: inherit;
}
a {
  color: inherit;
  text-decoration: none;
}
svg {
  display: block;
  overflow: visible;
}
.sprite {
  position: absolute;
  width: 0;
  height: 0;
}
.grow {
  flex: 1;
}

/* controls */
.btn {
  height: 20px;
  border: 1px solid #363636;
  border-right-color: #111;
  border-bottom-color: #111;
  white-space: nowrap;
}
.drop {
  appearance: none;
  height: 20px;
  min-width: 0;
  padding-left: 2px;
  border: 2px solid #111;
  border-right-color: #333;
  border-bottom-color: #333;
  background:
    url("data:image/svg+xml,%3Csvg xmlns='http://www.w3.org/2000/svg' width='8' height='5'%3E%3Cpath d='M0 0h8L4 5z'/%3E%3C/svg%3E") no-repeat right 3px center,
    linear-gradient(#f2f2f2, #e6e6e6 50%, #cfcfcf 50%, #dcdcdc);
  color: #000;
}
.drop.dark {
  background:
    url("data:image/svg+xml,%3Csvg xmlns='http://www.w3.org/2000/svg' width='8' height='5'%3E%3Cpath d='M0 0h8L4 5z'/%3E%3C/svg%3E") no-repeat right 4px center,
    linear-gradient(270deg, #fff 17px, #555 17px);
  color: #e0e0e0;
}
.w100 {
  width: 102px;
}
.w110 {
  width: 112px;
}
.field, .spin input {
  min-width: 0;
  border: 2px solid #111;
  border-right-color: #383838;
  border-bottom-color: #383838;
  background: #555;
  color: #e6e6e6;
}
.spin {
  display: flex;
  gap: 2px;
}
.spin input {
  width: 38px;
  height: 16px;
  padding-left: 1px;
}
.spin svg {
  width: 11px;
  height: 16px;
}
.spin.wide input {
  width: 44px;
}
.spin.mid input {
  width: 54px;
  padding-left: 2px;
}
.spin.big input {
  width: 57px;
  height: 19px;
}
.spin.frame input {
  width: 64px;
  height: 20px;
}
.spin.big svg, .spin.frame svg {
  height: 18px;
}
input[type="checkbox"], input[type="radio"] {
  appearance: none;
  flex: none;
  width: 13px;
  height: 13px;
  border: 2px solid #151515;
  border-right: 1px solid #333;
  border-bottom: 1px solid #333;
  background: #505050;
}
input[type="checkbox"]:checked {
  background: #505050 url("data:image/svg+xml,%3Csvg xmlns='http://www.w3.org/2000/svg' width='9' height='9'%3E%3Cpath d='M1 4l3 3 4-6' fill='none' stroke='%23eee' stroke-width='2'/%3E%3C/svg%3E") no-repeat center;
}
input[type="radio"] {
  width: 11px;
  height: 11px;
  border: 2px solid #111;
  border-radius: 50%;
  background: #eee;
}
label {
  display: flex;
  align-items: center;
  gap: 5px;
  white-space: nowrap;
}
.off {
  color: #151515;
}
.swatch {
  width: 18px;
  height: 20px;
  border: 1px solid #111;
}
.yellow {
  background: #ffe400;
}
.white {
  width: 41px;
  height: 23px;
  background: #fff;
}

/* main toolbar */
.toolbar {
  display: flex;
  align-self: flex-start;
  padding: 1px 10px 2px 6px;
  border-left: 2px solid #222;
  border-right: 1px solid #000;
  border-bottom: 1px solid #000;
}
.tool {
  width: 32px;
  height: 33px;
  padding: 0 2px 4px;
}
.tool svg {
  width: 28px;
  height: 28px;
}
.tool.active {
  border: solid #111;
  border-width: 1px 1px 0;
  background: #3d7edb;
  padding: 0 1px 4px;
}
.sep {
  flex: none;
  width: 2px;
  height: 17px;
  margin: 9px 2px 0;
  background: #151515;
}
.toolbar .drop {
  width: 68px;
  height: 21px;
  margin: 2px 1px;
  font: 11px Roboto, sans-serif;
}
.toolbar .named {
  width: 117px;
  color: #161616;
  box-shadow: inset 0 0 0 1px #eee;
}
.glyph {
  font: 16px "Open Sans", sans-serif;
  fill: #e0e0e0;
}
.abc {
  font: bold 7px "Liberation Sans", sans-serif;
  fill: #e0e0e0;
}

/* ribbon */
.ribbon {
  display: flex;
  height: 41px;
  border-top: 1px solid #5a5a5a;
  background: linear-gradient(#525252 19px, #222 19px, #4a4a4a 20px, #383838);
  font: 12px/18px "Open Sans", sans-serif;
}
.grip {
  width: 4px;
  margin: 3px 5px 3px 3px;
  border: solid #151515;
  border-width: 0 1px;
}
.ribbon-tabs {
  display: flex;
  flex-direction: column;
}
.ribbon-tab {
  padding: 1px 20px 0 22px;
  border-left: 1px solid #222;
  background: linear-gradient(#686868, #555);
}
.ribbon-panel {
  align-self: flex-start;
  margin-top: 1px;
  padding: 0 4px;
  border: 1px solid #333;
  background: #4a4a4a;
  color: #eee;
}

/* viewport and time line */
.work {
  display: flex;
  flex: 1;
}
.stage {
  display: flex;
  flex: 1;
  flex-direction: column;
}
.viewport {
  position: relative;
  display: flex;
  flex: 1;
  padding: 0 61px;
  margin-right: 2px;
  border: 2px solid #7b6a2b;
  background: #393939;
}
.safe-frame {
  flex: 1;
  border: 1px solid #c4c400;
}
.view-label {
  position: absolute;
  top: 3px;
  left: 4px;
  font: 11px/15px "Liberation Sans", sans-serif;
}
.view-cube {
  position: absolute;
  top: 36px;
  right: 11px;
  width: 80px;
  height: 50px;
}
.cube-text {
  font: bold 7px "Liberation Sans", sans-serif;
  fill: #5c6068;
  text-anchor: middle;
}
.time-slider {
  display: flex;
  justify-content: flex-end;
  gap: 2px;
  height: 20px;
  padding: 2px 135px 2px 0;
  margin-right: 2px;
  border-bottom: 1px solid #111;
  font-size: 11px;
}
.time-btn {
  width: 15px;
  border: 1px solid #333;
  line-height: 10px;
}
.time-thumb {
  width: 124px;
  border: 1px solid #222;
  border-bottom-color: #000;
}
.track {
  display: flex;
  height: 26px;
}
.track-icon {
  width: 20px;
  height: 18px;
  margin: 4px 18px 0 12px;
}
.ruler {
  position: relative;
  display: flex;
  flex: 1;
  margin-right: 55px;
  border-left: 2px solid #292929;
  background: #292929;
  box-shadow: 7px 0 #292929;
}
.tick {
  display: flex;
  flex: 1;
  align-items: flex-end;
  border-left: 1px solid #777;
  background: repeating-linear-gradient(90deg, transparent 0 calc(20% - 1px), #777 calc(20% - 1px) 20%) top / 100% 11px no-repeat;
}
.tick.last {
  flex: none;
  width: 1px;
}
.tick span {
  display: flex;
  justify-content: center;
  width: 0;
  font: 10px/13px "Open Sans", sans-serif;
}
.key, .now {
  position: absolute;
  top: 1px;
  width: 6px;
  height: 10px;
  margin-left: -2px;
  border: 1px solid #000;
}
.multi {
  background: linear-gradient(#c22 20%, #171 20% 60%, #22c 60%);
}
.red {
  background: #a22;
}
.now {
  width: 8px;
  height: 24px;
  margin-left: -3px;
  border: 0;
  background: #857a1e;
}

/* command panel */
.command {
  display: flex;
  flex-direction: column;
  width: 182px;
}
.tabs {
  display: flex;
  height: 26px;
  padding: 2px 8px 0 0;
  border-bottom: 1px solid #333;
}
.tabs button {
  flex: 1;
  border: solid #555;
  border-width: 1px 1px 0 0;
  border-right: 2px solid #151515;
  border-radius: 4px 4px 0 0;
}
.tabs svg {
  width: 24px;
  height: 20px;
  margin: auto;
}
.name-row {
  display: flex;
  gap: 4px;
  padding: 7px 8px 0 6px;
}
.name-row .field {
  flex: 1;
  height: 20px;
  font-size: 11px;
}
.modifier {
  height: 23px;
  margin: 6px 7px 0 7px;
  font-size: 11px;
}
.stack {
  height: 119px;
  margin: 5px 10px 0 7px;
  border: 2px solid #e8e8e8;
  background: #555;
}
.stack li {
  padding-left: 22px;
  background: #3d7edb;
  color: #e4e4e4;
  font-size: 11px;
  line-height: 16px;
}
.stack-tools {
  display: flex;
  align-items: center;
  gap: 4px;
  height: 30px;
  padding: 0 19px 0 13px;
  justify-content: space-between;
}
.stack-tools .sep {
  margin: 0;
  background: #222;
}
.stack-tools svg {
  width: 18px;
  height: 18px;
  margin: auto;
}
.boxed {
  width: 23px;
  height: 23px;
  border: 1px solid #111;
  border-right-color: #333;
  border-bottom-color: #333;
}
.params, .inspector {
  display: flex;
  border: 1px solid #111;
  border-right: 0;
}
.params {
  flex: 1;
  margin: 17px 6px 8px 3px;
  border-bottom: 0;
}
.rollups {
  flex: 1;
  min-width: 0;
  padding: 0 2px;
  overflow: hidden;
}
.rollup {
  margin-top: 16px;
  padding: 0 2px;
  border: 1px solid #111;
}
.rollup:first-child {
  margin-top: 9px;
}
.rollup h2, .bluebar {
  position: relative;
  height: 16px;
  font-size: 11px;
  line-height: 15px;
  text-align: center;
}
.rollup h2 {
  height: 17px;
  margin: -9px 1px 0;
  border: 1px solid #666;
  background: #3d3d3d;
  color: #e8e8e8;
}
.rollup b, .bluebar b {
  position: absolute;
  left: 3px;
  font-weight: normal;
}
.bluebar b {
  left: 6px;
}
.params fieldset, .inspector fieldset {
  min-width: 0;
  padding: 0 5px 3px;
  border: 1px solid #111;
}
.params fieldset {
  margin: 2px 1px 4px;
  padding: 0 4px 3px;
}
.params h2 + fieldset {
  margin-top: 7px;
}
legend {
  margin-left: 1px;
  padding: 0 3px;
}
.line {
  display: flex;
  align-items: center;
  gap: 4px;
  height: 21px;
}
.line.tall {
  height: 24px;
}
.line.short {
  height: 17px;
}
.line.end {
  justify-content: flex-end;
}
.tall.end {
  height: 26px;
}
.exclude {
  display: block;
  height: 18px;
  margin: -1px 1px 6px auto;
  font-size: 11px;
}
.multiplier {
  margin: 3px 4px 0 7px;
}
.scroll {
  display: flex;
  flex-direction: column;
  width: 4px;
}
.rest {
  flex: 1;
  background: #111;
}
.thumb {
  flex: 1;
  background: #c0c0c0;
}
.upper {
  flex: 4;
}
.thumb.lower {
  flex: 0 0 44%;
}

/* status bar */
.status {
  display: flex;
  height: 47px;
  gap: 4px;
  padding: 3px 3px 0 0;
}
.listener {
  display: flex;
  flex-direction: column;
  width: 99px;
  margin-right: 4px;
  background: #fff;
  gap: 2px;
}
.listener input {
  height: 22px;
  border: 2px solid #777;
  border-right-color: #eee;
  border-bottom-color: #eee;
  color: #000;
}
.pink {
  background: #dcc3c4;
}
.mono {
  padding-left: 2px;
  font: 12px "Liberation Mono", monospace;
}
.messages {
  display: flex;
  flex: 1;
  flex-direction: column;
  gap: 4px;
}
.bar-row {
  display: flex;
  align-items: center;
  gap: 3px;
  height: 21px;
}
.messages .bar-row {
  gap: 2px;
}
.well {
  height: 21px;
  padding: 0 5px;
  border: 1px solid #111;
  border-right-color: #333;
  border-bottom-color: #333;
  font: 11px/19px Roboto, sans-serif;
  text-align: left;
  white-space: nowrap;
}
.side {
  width: 99px;
}
.bare {
  flex: none;
  width: 24px;
  height: 20px;
}
.bare svg {
  width: 18px;
  height: 18px;
  margin: auto;
}
.coord {
  display: flex;
  align-items: center;
  font-size: 11px;
}
.coord label {
  width: 11px;
}
.set-key {
  width: 44px;
  height: 44px;
}
.set-key svg {
  width: 28px;
  height: 15px;
  margin: auto;
}
.key-col {
  display: flex;
  flex-direction: column;
  gap: 2px;
}
.key-col .btn {
  height: 21px;
  font: 11px/18px Roboto, sans-serif;
}
.modes {
  width: 45px;
}
.filters {
  width: 114px;
  margin-left: 2px;
}
.filters .drop {
  height: 20px;
  font: 11px Roboto, sans-serif;
}
.playback {
  display: flex;
  flex-direction: column;
  gap: 2px;
  width: 125px;
}
.playback .bar-row {
  gap: 1px;
}
.nav-tools {
  display: grid;
  grid-template-columns: repeat(4, 23px);
  grid-auto-rows: 21px;
  gap: 2px 0;
}
.nav-tools .bare {
  width: 23px;
}

/* floating window */
.window {
  position: absolute;
  top: 30px;
  right: 294px;
  bottom: 91px;
  left: 124px;
  display: flex;
  flex-direction: column;
  padding: 0 6px 6px;
  border: 1px solid #0c1a30;
  border-radius: 7px 7px 4px 4px;
  background: linear-gradient(#8ba5cc, #6f90bd 60px, #b6cae6 190px, #143f82 191px, #1f4a85);
  box-shadow: inset 0 0 0 1px #c3d9f2, 2px 3px 10px rgba(0, 0, 0, 0.8);
}
.titlebar {
  display: flex;
  align-items: center;
  height: 26px;
  margin: 1px -5px 0;
  padding: 0 5px 0 7px;
  border-radius: 6px 6px 0 0;
  background: linear-gradient(90deg, #7f97bd, #8ea4c8 200px, #7b93bd 350px, #1c4480 390px, #1c4480 80%, #6485b5);
}
.titlebar h1 {
  flex: 1;
  margin-left: 7px;
  color: #0a0a0a;
  font: 12px/18px Roboto, sans-serif;
  white-space: pre;
}
.app-icon {
  width: 14px;
  height: 12px;
}
.win-btns {
  display: flex;
  align-self: flex-start;
  height: 18px;
  border: 1px solid #dbe6f5;
  border-top: 0;
  border-radius: 0 0 4px 4px;
  overflow: hidden;
}
.win-btns button {
  width: 27px;
  border-right: 1px solid #dbe6f5;
  background: linear-gradient(#8ba3c8, #4a6797 50%, #5a7bad);
}
.win-btns .close {
  width: 47px;
  border: 0;
  background: linear-gradient(#d59a8c, #b03a26 50%, #c85a40);
}
.win-btns svg {
  width: 16px;
  height: 12px;
  margin: auto;
}
.client {
  display: flex;
  flex: 1;
  gap: 10px;
  min-height: 0;
  padding: 6px 0 2px 9px;
  border: 1px solid #a9c4e6;
  background: #444;
  overflow: hidden;
}
.bluebar {
  margin-left: 1px;
  background: #3399ff;
  color: #f0f0f0;
}
.trees {
  width: 247px;
  margin-right: 5px;
  padding-top: 4px;
}
.tree {
  padding: 1px 0 0 8px;
  border: 1px solid #888f99;
  background: #dcdcdc;
  color: #000;
}
.tree li {
  display: flex;
  align-items: center;
  height: 16px;
}
.systems {
  height: 151px;
}
.dynamics {
  height: 250px;
}
.tog {
  width: 9px;
  height: 9px;
  margin-right: 7px;
}
.ico {
  width: 16px;
  height: 16px;
  margin-right: 4px;
}
.l1 {
  padding-left: 19px;
}
.l2 {
  padding-left: 38px;
}
.l3 {
  padding-left: 57px;
}
.violet {
  background: #a9a0e8;
}
.pinkish {
  background: #c77be8;
}
.tan {
  background: #c89664;
}
.amber {
  background: #f0b437;
}
mark {
  margin-left: -2px;
  padding: 0 3px;
  background: #fafafa;
  color: #000;
}
.tree-btns {
  display: flex;
  align-items: center;
  gap: 6px;
  padding: 2px 0 6px 18px;
}
.tree-btns > .btn {
  width: 51px;
}
.tree-btns .btn, .file-btns .btn, .rec-btns .btn {
  font-size: 11px;
}
.updown {
  display: flex;
  flex-direction: column;
  gap: 3px;
  width: 41px;
}
.dynamics + .tree-btns {
  padding-bottom: 1px;
}
.file-btns {
  display: flex;
  gap: 5px;
  width: 188px;
  padding-left: 3px;
}
.file-btns .btn {
  width: 27px;
  height: 24px;
}
.push {
  margin-left: auto;
}
.file-btns svg {
  width: 20px;
  height: 18px;
  margin: auto;
}

/* node graph */
.graph {
  flex: 1;
  padding-top: 4px;
}
.canvas {
  position: relative;
  height: 453px;
  overflow: hidden;
  background:
    linear-gradient(#b2b2b2 1px, transparent 1px) 0 1px / 14px 14px,
    linear-gradient(90deg, #b2b2b2 1px, transparent 1px) 2px 0 / 14px 14px,
    #dcdcdc;
}
.canvas-bar {
  display: flex;
  gap: 6px;
  height: 22px;
  padding: 2px 2px 0 3px;
  font-size: 11px;
}
.canvas-bar .on {
  width: 29px;
  border: 2px solid #333;
  background: #3d7edb;
  color: #b8c8e8;
}
.valid {
  width: 46px;
  border: 1px solid #111;
  background: #0f0;
  color: #083008;
}
.save {
  width: 30px;
  background: #444;
}
.canvas-bar input {
  flex: 1;
  border: solid #111;
  border-width: 2px 1px 1px 2px;
  background: #555;
}
.bypass {
  width: 21px;
  margin-left: -4px;
  border: 1px solid #111;
  background: #e6e6e6;
}
.bypass i {
  display: block;
  width: 7px;
  height: 11px;
  margin-left: 3px;
  border: 1px solid #111;
  background: #f0b437;
}
.port {
  position: absolute;
  top: 25px;
  width: 28px;
  height: 29px;
  border: 1px solid #111;
  border-radius: 7px;
  background: radial-gradient(circle 6px at 0 50%, #8ef04e 5px, transparent 6px), #a198e4;
  box-shadow: 2px 4px 4px rgba(0, 0, 0, 0.3);
}
.in {
  left: 0;
}
.out {
  right: 0;
  background: radial-gradient(circle 6px at 100% 50%, #5ce8b0 5px, transparent 6px), #a198e4;
}
.node {
  position: absolute;
  top: 104px;
  left: 110px;
  width: 178px;
  padding: 5px 4px 2px;
  border: 1px solid #111;
  border-radius: 8px;
  background:
    radial-gradient(circle at 0 14px, #8ef04e 4px, transparent 5px),
    radial-gradient(circle at 100% 14px, #5ce8b0 4px, transparent 5px),
    #f0b437;
  box-shadow: 4px 4px 6px rgba(0, 0, 0, 0.35);
  color: #111;
  font: 10px/14px "Liberation Sans", sans-serif;
}
.node h3 {
  height: 16px;
  margin: 0 1px 7px;
  padding-left: 3px;
  border-radius: 3px;
  background: #f8f8f8;
  font-size: 14px;
  line-height: 16px;
}
.node-body {
  display: grid;
  grid-template-columns: 62px 1fr;
  white-space: nowrap;
}
.tip {
  position: absolute;
  top: 32px;
  left: 48px;
  padding: 0 5px;
  border: 1px solid #666;
  border-radius: 2px;
  background: linear-gradient(#fff, #e2e4f0);
  box-shadow: 3px 3px 3px rgba(0, 0, 0, 0.5);
  color: #555;
  font: 12px/18px Roboto, sans-serif;
}

/* inspector */
.inspector {
  width: 181px;
  padding-right: 5px;
}
.inspector .rollups {
  padding: 0 0 0 5px;
}
.inspector .rollup {
  padding: 0 2px 3px 1px;
  margin-top: 13px;
}
.inspector .rollup:first-child {
  margin: 10px 2px 0 0;
}
.inspector .open {
  padding: 0 1px;
}
.kinds {
  display: flex;
  justify-content: space-between;
  padding: 5px 8px 6px;
}
.kinds button {
  width: 27px;
  height: 24px;
  border: 1px solid #393939;
  border-right-color: #111;
  border-bottom-color: #111;
}
.kinds svg {
  width: 24px;
  height: 22px;
}
.kinds .picked {
  background: #3d7edb;
}
.blank {
  display: block;
  width: auto;
  min-width: 142px;
  margin: 0 auto 4px;
  background: url("data:image/svg+xml,%3Csvg xmlns='http://www.w3.org/2000/svg' width='8' height='5'%3E%3Cpath d='M0 0h8L4 5z' fill='%23aaa'/%3E%3C/svg%3E") no-repeat right 3px center, #f4f4f4;
}
.pairs {
  display: grid;
  grid-template-columns: 1fr 1fr;
  gap: 3px 1px;
}
.pairs .btn {
  height: 18px;
}
.inspector fieldset {
  margin-bottom: 9px;
  padding: 1px 4px 2px 5px;
}
.inspector .particle {
  margin-bottom: 8px;
  padding: 0 4px 0 1px;
}
.inspector .floor {
  margin-bottom: 12px;
}
.particle .line {
  height: 27px;
  margin-bottom: 4px;
}
.particle .line:last-child {
  height: 35px;
  margin-bottom: 0;
  padding-left: 5px;
}
.inspector .line.optimize {
  height: 20px;
  margin-bottom: 10px;
}
.voxels .line {
  height: 20px;
  padding-left: 12px;
}
.inspector .voxels {
  padding: 10px 0 15px 5px;
}
.progress {
  height: 20px;
  margin-top: 4px;
  border: 1px solid #333;
  border-right-color: #111;
  border-bottom-color: #111;
}
.rec-btns {
  display: flex;
  justify-content: center;
  gap: 6px;
  padding: 7px 0 16px;
}
.rec-btns .btn {
  width: 50px;
}
.recorder .line {
  padding-left: 4px;
}
.inspector .recorder {
  padding: 0 4px;
}
```
